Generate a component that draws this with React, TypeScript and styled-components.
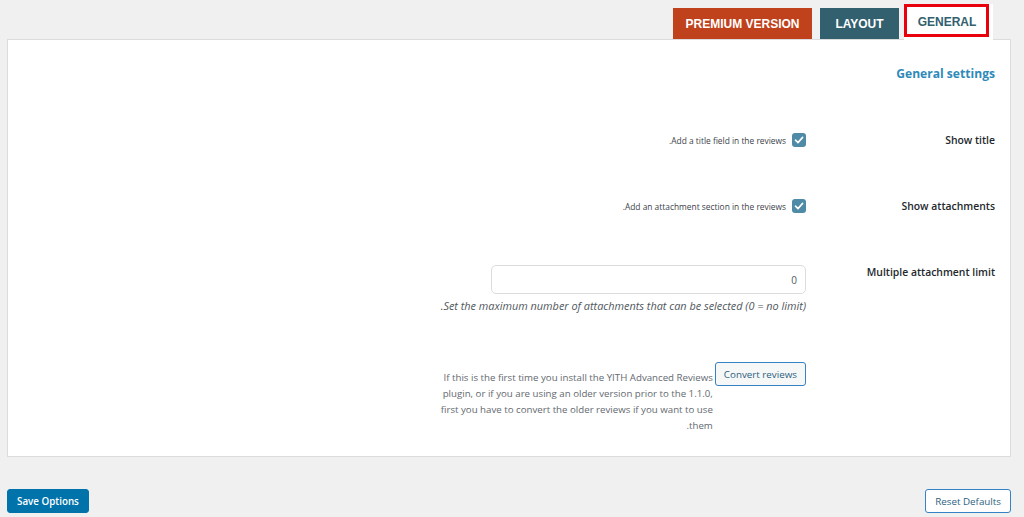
import styled, { createGlobalStyle } from "styled-components"

const GlobalStyle = createGlobalStyle`
    html, body {
        margin: 0;
        padding: 0;
        background: #f0f0f1;
    }
    body {
        font-family: "Open Sans", "Noto Sans", sans-serif;
        color: #1d2327;
    }
`

export default function App() {
    return <Page dir="rtl">
        <GlobalStyle />
        <Tabs>
            <Tab active w={89}>GENERAL</Tab>
            <Tab bg="#32606f" w={79}>LAYOUT</Tab>
            <Tab bg="#c0421d" w={139}>PREMIUM VERSION</Tab>
        </Tabs>
        <Panel>
            <Header>General settings</Header>
            <Row>
                <Label>Show title</Label>
                <Field>
                    <CheckLine>
                        <Check><CheckMark /></Check>
                        <Small>Add a title field in the reviews.</Small>
                    </CheckLine>
                </Field>
            </Row>
            <Row>
                <Label>Show attachments</Label>
                <Field>
                    <CheckLine>
                        <Check><CheckMark /></Check>
                        <Small>Add an attachment section in the reviews.</Small>
                    </CheckLine>
                </Field>
            </Row>
            <Row>
                <Label>Multiple attachment limit</Label>
                <Field>
                    <NumberInput>0</NumberInput>
                    <Italic>Set the maximum number of attachments that can be selected (0 = no limit).</Italic>
                </Field>
            </Row>
            <Row top={29}>
                <Label />
                <Field>
                    <ConvertLine>
                        <OutlineButton>Convert reviews</OutlineButton>
                        <Note>
                            If this is the first time you install the YITH Advanced Reviews plugin, or if you are using an older version prior to the 1.1.0, first you have to convert the older reviews if you want to use them.
                        </Note>
                    </ConvertLine>
                </Field>
            </Row>
        </Panel>
        <Footer>
            <OutlineButton wide>Reset Defaults</OutlineButton>
            <PrimaryButton>Save Options</PrimaryButton>
        </Footer>
    </Page>
}

function CheckMark() {
    return <svg width="10" height="10" viewBox="0 0 10 10">
        <path d="M1.5 5.2 L4 7.6 L8.6 2.4" fill="none" stroke="#fff" strokeWidth="1.6" strokeLinecap="round" strokeLinejoin="round" />
    </svg>
}

const Page = styled.div`
    padding: 0 13px 0 7px;
    height: 517px;
    box-sizing: border-box;
    overflow: hidden;
`
const Tabs = styled.div`
    display: flex;
    align-items: flex-end;
    padding-right: 18px;
    height: 39px;
`
const Tab = styled.div<{ active?: boolean; bg?: string; w: number }>`
    font-family: "Liberation Sans", Arial, sans-serif;
    font-weight: bold;
    font-size: 12px;
    display: flex;
    align-items: center;
    justify-content: center;
    box-sizing: border-box;
    width: ${(p) => p.w}px;
    height: ${(p) => (p.active ? "36px" : "31px")};
    padding-right: ${(p) => (p.active ? "3px" : "0")};
    margin-bottom: ${(p) => (p.active ? "-1px" : "0")};
    margin-left: ${(p) => (p.active ? "5px" : "8px")};
    color: ${(p) => (p.active ? "#32606f" : "#fff")};
    background: ${(p) => (p.active ? "#fff" : p.bg)};
    position: relative;
    z-index: 1;
    &::after {
        content: "";
        display: ${(p) => (p.active ? "block" : "none")};
        position: absolute;
        left: 0;
        top: 0;
        width: 85px;
        height: 33px;
        box-sizing: border-box;
        border: 3px solid #e8000d;
    }
`
const Panel = styled.div`
    background: #fff;
    border: 1px solid #dcdcde;
    height: 418px;
    box-sizing: border-box;
`
const Header = styled.h2`
    margin: 0;
    padding: 26px 15px 0 0;
    height: 73px;
    box-sizing: border-box;
    font-size: 12.1px;
    font-weight: 700;
    line-height: 16px;
    color: #2f8ab9;
`
const Row = styled.div<{ top?: number }>`
    display: grid;
    grid-template-columns: 204px 1fr;
    align-items: start;
    padding: ${(p) => p.top ?? 20}px 0 20px;
`
const Label = styled.div`
    padding-right: 15px;
    font-size: 10.4px;
    font-weight: 600;
    line-height: 14px;
    color: #23282d;
`
const Field = styled.div`
    min-height: 26px;
    display: flex;
    flex-direction: column;
    align-items: flex-start;
`
const CheckLine = styled.div`
    display: flex;
    align-items: center;
    gap: 6px;
`
const Check = styled.span`
    width: 14px;
    height: 14px;
    border-radius: 3px;
    background: #4f8ba6;
    display: flex;
    align-items: center;
    justify-content: center;
`
const Small = styled.span`
    font-size: 8.4px;
    color: #3c434a;
`
const NumberInput = styled.div`
    width: 315px;
    height: 29px;
    box-sizing: border-box;
    border: 1px solid #dcdcde;
    border-radius: 5px;
    display: flex;
    align-items: center;
    justify-content: flex-start;
    padding: 0 8px;
    font-size: 10px;
    color: #50575e;
`
const Italic = styled.p`
    margin: 5px 0 0;
    font-size: 10.9px;
    font-style: italic;
    line-height: 14px;
    color: #50575e;
`
const ConvertLine = styled.div`
    display: flex;
    align-items: flex-start;
    gap: 2px;
`
const OutlineButton = styled.button<{ wide?: boolean }>`
    font-family: "Open Sans", "Noto Sans", sans-serif;
    font-size: 9.8px;
    height: 24px;
    padding: 0 ${(p) => (p.wide ? "9px" : "8px")};
    background: ${(p) => (p.wide ? "#fff" : "#f6f7f7")};
    border: 1px solid #3582c4;
    border-radius: 3px;
    color: #2c5f7e;
    white-space: nowrap;
`
const Note = styled.p`
    margin: 8px 0 0;
    width: 282px;
    font-size: 9.7px;
    line-height: 16px;
    color: #646970;
    text-align: right;
`
const Footer = styled.div`
    display: flex;
    justify-content: space-between;
    margin-top: 32px;
`
const PrimaryButton = styled.button`
    font-family: "Open Sans", "Noto Sans", sans-serif;
    font-size: 9.8px;
    font-weight: 600;
    height: 24px;
    padding: 0 9px;
    background: #0073aa;
    border: 1px solid #0073aa;
    border-radius: 3px;
    color: #fff;
`
